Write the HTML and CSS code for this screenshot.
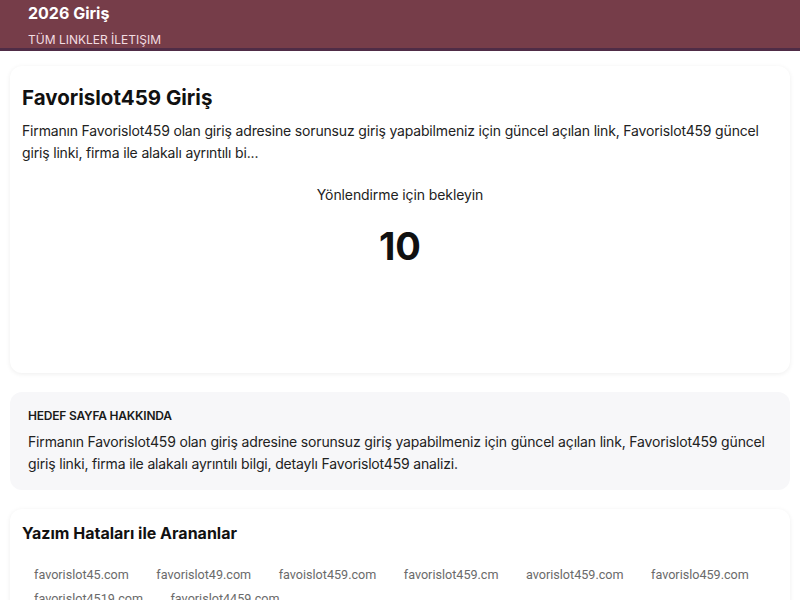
FILE: index.html
```html
<!DOCTYPE html>
<html lang="tr">
<head>
<meta charset="utf-8">
<link rel="stylesheet" href="styles.css">
</head>
<body>
<header class="topbar">
  <div class="brand">2026 Giriş</div>
  <nav class="nav"><span>TÜM LINKLER</span> <span>İLETIŞIM</span></nav>
</header>
<main class="wrap">
  <section class="card hero">
    <h1 class="hero-title">Favorislot459 Giriş</h1>
    <p class="hero-text">Firmanın Favorislot459 olan giriş adresine sorunsuz giriş yapabilmeniz için güncel açılan link, Favorislot459 güncel giriş linki, firma ile alakalı ayrıntılı bi...</p>
    <p class="wait">Yönlendirme için bekleyin</p>
    <div class="count">10</div>
  </section>
  <section class="about">
    <h2 class="about-title">HEDEF SAYFA HAKKINDA</h2>
    <p class="about-text">Firmanın Favorislot459 olan giriş adresine sorunsuz giriş yapabilmeniz için güncel açılan link, Favorislot459 güncel giriş linki, firma ile alakalı ayrıntılı bilgi, detaylı Favorislot459 analizi.</p>
  </section>
  <section class="card typos">
    <h2 class="typos-title">Yazım Hataları ile Arananlar</h2>
    <div class="tags">
      <span class="tag">favorislot45.com</span>
      <span class="tag">favorislot49.com</span>
      <span class="tag">favoislot459.com</span>
      <span class="tag">favorislot459.cm</span>
      <span class="tag">avorislot459.com</span>
      <span class="tag">favorislo459.com</span>
      <span class="tag">favorislot4519.com</span>
      <span class="tag">favorislot4459.com</span>
    </div>
  </section>
</main>
</body>
</html>
```
FILE: styles.css
```css
* { box-sizing: border-box; }
body {
  margin: 0;
  background: #ffffff;
  font-family: Inter, "Noto Sans", "DejaVu Sans", sans-serif;
  color: #1a1a1a;
}
.topbar {
  background: #763d49;
  border-bottom: 3px solid #4f2c46;
  height: 51px;
  padding: 2px 28px 0;
}
.brand {
  color: #ffffff;
  font-size: 16px;
  font-weight: 700;
  line-height: 22px;
}
.nav {
  margin-top: 8px;
  color: #f3dde2;
  font-size: 12px;
  line-height: 16px;
}
.wrap {
  padding: 15px 10px 0;
  display: flex;
  flex-direction: column;
  gap: 19px;
}
.card {
  background: #ffffff;
  border-radius: 12px;
  box-shadow: 0 1px 5px rgba(0, 0, 0, 0.07);
}
.hero {
  padding: 18px 12px 103px;
}
.hero-title {
  margin: 0;
  font-size: 20.5px;
  line-height: 28px;
  font-weight: 700;
  color: #111;
}
.hero-text {
  margin: 8px 0 0;
  font-size: 14px;
  line-height: 22px;
  letter-spacing: -0.17px;
  color: #222;
}
.wait {
  margin: 20px 0 0;
  text-align: center;
  font-size: 14px;
  line-height: 22px;
  letter-spacing: -0.1px;
  color: #222;
}
.count {
  margin-top: 16px;
  text-align: center;
  font-size: 38px;
  line-height: 48px;
  font-weight: 700;
  color: #111;
}
.about {
  background: #f7f7f9;
  border-radius: 12px;
  padding: 16px 18px 15px;
}
.about-title {
  margin: 0;
  font-size: 12px;
  line-height: 16px;
  font-weight: 600;
  letter-spacing: -0.2px;
  color: #1a1a1a;
}
.about-text {
  margin: 7px 0 0;
  font-size: 14px;
  line-height: 22px;
  letter-spacing: -0.17px;
  color: #222;
}
.typos {
  padding: 12px 12px 12px;
}
.typos-title {
  margin: 0;
  font-size: 16px;
  line-height: 24px;
  font-weight: 700;
  color: #111;
}
.tags {
  margin-top: 21px;
  display: flex;
  flex-wrap: wrap;
  gap: 6px 3.5px;
}
.tag {
  font-family: Roboto, "Liberation Sans", sans-serif;
  font-size: 12.6px;
  line-height: 18px;
  color: #6a6a6a;
  padding: 0 12px;
}
```
